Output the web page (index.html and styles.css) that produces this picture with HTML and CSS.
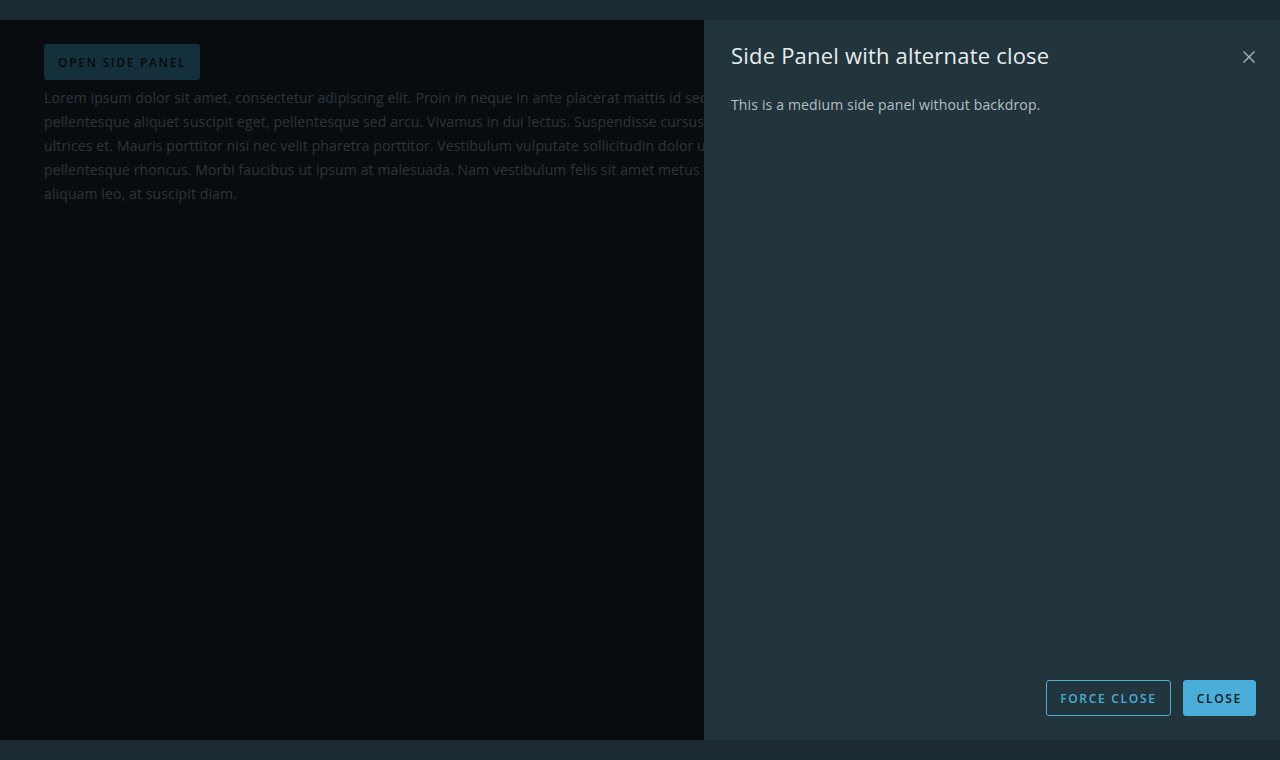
FILE: index.html
```html
<!DOCTYPE html>
<html lang="en">
<head>
<meta charset="utf-8">
<title>Side Panel</title>
<link rel="stylesheet" href="styles.css">
</head>
<body>
<div class="app">
  <header class="topbar"></header>
  <div class="stage">
    <main class="content">
      <button class="btn btn-open" type="button">Open side panel</button>
      <p class="lorem">Lorem ipsum dolor sit amet, consectetur adipiscing elit. Proin in neque in ante placerat mattis id sed quam. Proin rhoncus lacus et tempor dignissim. Vivamus sem quam,<br>pellentesque aliquet suscipit eget, pellentesque sed arcu. Vivamus in dui lectus. Suspendisse cursus est ac nisl imperdiet viverra. Aenean sagittis nibh lacus, in eleifend urna<br>ultrices et. Mauris porttitor nisi nec velit pharetra porttitor. Vestibulum vulputate sollicitudin dolor ut tincidunt. Phasellus vitae blandit felis. Nullam posuere ipsum tincidunt velit<br>pellentesque rhoncus. Morbi faucibus ut ipsum at malesuada. Nam vestibulum felis sit amet metus finibus hendrerit. Fusce faucibus odio eget ex vulputate rhoncus. Fusce nec<br>aliquam leo, at suscipit diam.</p>
    </main>
    <aside class="panel">
      <div class="panel-head">
        <h2 class="panel-title">Side Panel with alternate close</h2>
        <button class="panel-x" type="button" aria-label="Close">
          <svg viewBox="0 0 14 14" width="14" height="14"><path d="M1.5 1.5 L12.5 12.5 M12.5 1.5 L1.5 12.5" stroke="currentColor" stroke-width="1.4" fill="none"/></svg>
        </button>
      </div>
      <div class="panel-body">
        <p>This is a medium side panel without backdrop.</p>
      </div>
      <div class="panel-foot">
        <button class="btn btn-outline" type="button">Force close</button>
        <button class="btn btn-primary" type="button">Close</button>
      </div>
    </aside>
  </div>
  <footer class="bottombar"></footer>
</div>
</body>
</html>
```
FILE: styles.css
```css
* { box-sizing: border-box; }
html, body { margin: 0; padding: 0; }
body {
  width: 1280px;
  height: 760px;
  overflow: hidden;
  background: #1c2a33;
  font-family: "Open Sans", "Noto Sans", sans-serif;
}
.app {
  display: flex;
  flex-direction: column;
  height: 760px;
}
.topbar, .bottombar {
  height: 20px;
  flex: 0 0 20px;
  background: #1c2a32;
}
.stage {
  flex: 1;
  display: flex;
  background: #080c0f;
  overflow: hidden;
}
.content {
  flex: 1;
  min-width: 0;
  padding: 24px 0 0 44px;
  overflow: hidden;
}
.btn {
  font-family: "Open Sans", "Noto Sans", sans-serif;
  font-size: 12px;
  font-weight: 600;
  letter-spacing: 1.7px;
  text-transform: uppercase;
  height: 36px;
  padding: 0 13px;
  border-radius: 3px;
  border: 1px solid transparent;
  cursor: pointer;
}
.btn-open {
  background: #15303d;
  color: #05090b;
  border-color: #15303d;
}
.lorem {
  margin: 6px 0 0;
  white-space: nowrap;
  font-size: 14px;
  line-height: 24px;
  letter-spacing: 0.12px;
  color: #2d3539;
}
.panel {
  flex: 0 0 576px;
  background: #22343c;
  display: flex;
  flex-direction: column;
  padding: 22px 24px 24px 27px;
}
.panel-head {
  display: flex;
  align-items: center;
  justify-content: space-between;
}
.panel-title {
  margin: 0;
  font-weight: 400;
  font-size: 22px;
  line-height: 26px;
  letter-spacing: 0.2px;
  color: #e8ecee;
}
.panel-x {
  background: none;
  border: 0;
  padding: 0;
  color: #a9b6bd;
  width: 14px;
  height: 14px;
  display: flex;
  margin-top: 4px;
}
.panel-body {
  flex: 1;
  padding-top: 25px;
}
.panel-body p {
  margin: 0;
  font-size: 14px;
  line-height: 24px;
  letter-spacing: 0.15px;
  color: #b5bfc4;
}
.panel-foot {
  display: flex;
  justify-content: flex-end;
  gap: 12px;
}
.btn-outline {
  background: transparent;
  border-color: #4aaed9;
  color: #4aaed9;
}
.btn-primary {
  background: #4aaed9;
  border-color: #4aaed9;
  color: #0c1a20;
}
```
